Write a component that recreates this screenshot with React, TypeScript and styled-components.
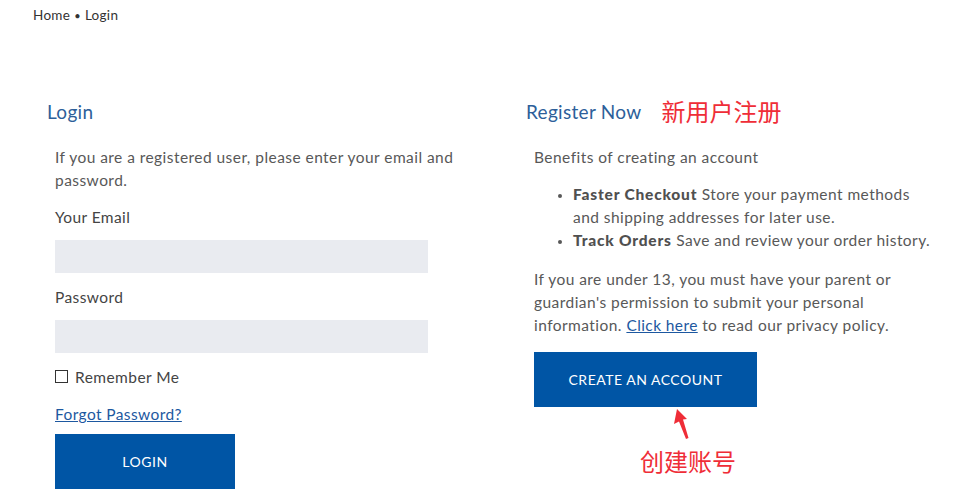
import React from "react";
import styled, { createGlobalStyle } from "styled-components";

const Global = createGlobalStyle`
  html, body { margin: 0; padding: 0; background: #fff; }
  body { font-family: Lato, "Open Sans", "Noto Sans", sans-serif; color: #555; }
  * { box-sizing: border-box; }
`;

const Page = styled.div`
  width: 954px;
  height: 496px;
  overflow: hidden;
  padding: 6px 0 0 33px;
`;

const Breadcrumb = styled.div`
  font-size: 13.5px;
  line-height: 18px;
  color: #333;
  letter-spacing: 0.3px;
`;

const Dot = styled.span`
  margin: 0 4px;
  font-size: 11px;
`;

const Columns = styled.div`
  display: grid;
  grid-template-columns: 479px 420px;
  margin: 71px 0 0 14px;
`;

const Column = styled.div`
  display: flex;
  flex-direction: column;
`;

const HeadingRow = styled.div`
  display: flex;
  align-items: center;
  gap: 20px;
  height: 30px;
`;

const Heading = styled.h2`
  margin: 0;
  font-weight: 400;
  font-size: 19px;
  color: #2d5f9a;
  letter-spacing: 0.3px;
`;

const Note = styled.span`
  font-family: "Noto Sans CJK SC", sans-serif;
  font-size: 24px;
  line-height: 30px;
  color: #ef2d37;
  letter-spacing: 0;
`;

const Body = styled.div<{ $top: number }>`
  padding-left: 8px;
  margin-top: ${(p) => p.$top}px;
  display: flex;
  flex-direction: column;
  width: 408px;
`;

const Para = styled.p<{ $mb?: number }>`
  margin: 0 0 ${(p) => p.$mb ?? 0}px;
  font-size: 15.5px;
  line-height: 23px;
  color: #585858;
  letter-spacing: 0.45px;
`;

const Label = styled.label`
  display: block;
  height: 23px;
  font-size: 15.5px;
  line-height: 23px;
  color: #444;
  letter-spacing: 0.4px;
`;

const Input = styled.div`
  width: 373px;
  height: 33px;
  background: #e9ebf0;
  margin: 11px 0 13px;
`;

const CheckRow = styled.div`
  display: flex;
  align-items: center;
  gap: 7px;
  height: 23px;
  font-size: 15.5px;
  line-height: 23px;
  color: #444;
  letter-spacing: 0.45px;
`;

const Box = styled.span`
  width: 13px;
  height: 13px;
  border: 1px solid #333;
  margin-top: -3px;
`;

const Link = styled.a`
  color: #1d58a0;
  text-decoration: underline;
  font-size: 15.5px;
  line-height: 23px;
  letter-spacing: 0.4px;
`;

const LinkLine = styled.div`
  margin-top: 13px;
  height: 23px;
  line-height: 23px;
`;

const Button = styled.button<{ $w: number }>`
  width: ${(p) => p.$w}px;
  height: 55px;
  border: none;
  background: #0055a5;
  color: #fff;
  font-family: inherit;
  font-size: 14px;
  letter-spacing: 0.5px;
  padding: 0;
`;

const LoginButton = styled(Button)`
  margin-top: 9px;
`;

const List = styled.ul`
  margin: 14px 0 16px 0;
  padding-left: 39px;
  font-size: 15.5px;
  line-height: 23px;
  color: #585858;
  letter-spacing: 0.45px;
  li::marker { font-size: 13px; }
`;

const Strong = styled.b`
  font-weight: 900;
  color: #505050;
  letter-spacing: 0.8px;
`;

const CreateWrap = styled.div`
  margin-top: 15px;
  display: flex;
  flex-direction: column;
`;

const Annotation = styled.div`
  display: flex;
  flex-direction: column;
  align-items: flex-start;
  padding-left: 106px;
`;

const Arrow = styled.svg`
  margin: 2px 0 0 34px;
  display: block;
`;

const Note2 = styled(Note)`
  margin-top: 6px;
`;

export default function App() {
  return (
    <Page>
      <Global />
      <Breadcrumb>
        Home<Dot>•</Dot>Login
      </Breadcrumb>
      <Columns>
        <Column>
          <HeadingRow>
            <Heading>Login</Heading>
          </HeadingRow>
          <Body $top={20}>
            <Para $mb={14}>
              If you are a registered user, please enter your email and password.
            </Para>
            <Label>Your Email</Label>
            <Input />
            <Label>Password</Label>
            <Input />
            <CheckRow>
              <Box />
              Remember Me
            </CheckRow>
            <LinkLine>
              <Link href="#">Forgot Password?</Link>
            </LinkLine>
            <LoginButton $w={180}>LOGIN</LoginButton>
          </Body>
        </Column>
        <Column>
          <HeadingRow>
            <Heading>Register Now</Heading>
            <Note>新用户注册</Note>
          </HeadingRow>
          <Body $top={20}>
            <Para>Benefits of creating an account</Para>
            <List>
              <li>
                <Strong>Faster Checkout</Strong> Store your payment methods and shipping addresses for later use.
              </li>
              <li>
                <Strong>Track Orders</Strong> Save and review your order history.
              </li>
            </List>
            <Para>
              If you are under 13, you must have your parent or guardian's permission to submit your personal
              information. <Link href="#">Click here</Link> to read our privacy policy.
            </Para>
            <CreateWrap>
              <Button $w={223}>CREATE AN ACCOUNT</Button>
              <Annotation>
                <Arrow width="18" height="31" viewBox="0 0 18 31">
                  <polygon points="3,0 0,15 5,12.5 12,30 14.5,29 9,10.5 13,10" fill="#ef2d37" />
                </Arrow>
                <Note2>创建账号</Note2>
              </Annotation>
            </CreateWrap>
          </Body>
        </Column>
      </Columns>
    </Page>
  );
}
